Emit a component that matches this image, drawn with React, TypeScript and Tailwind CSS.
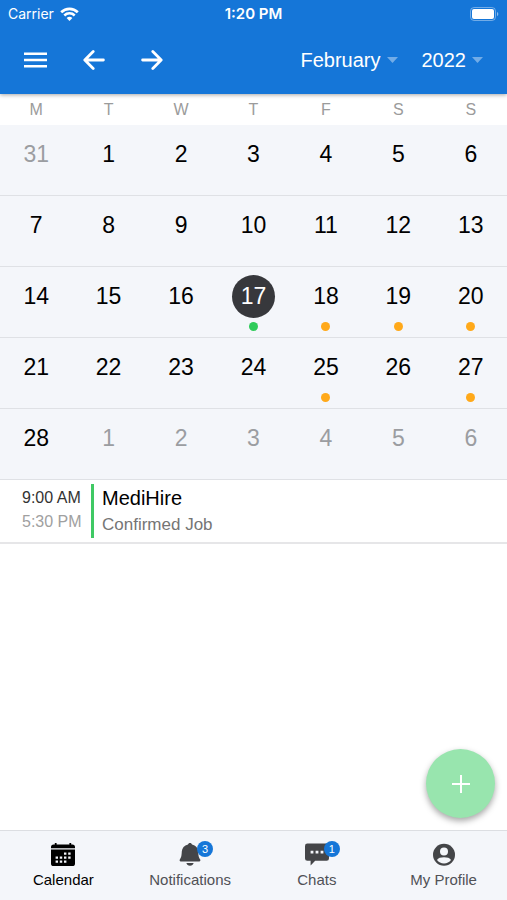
import type { ReactNode } from 'react'
import clsx from 'clsx'

type Day = {
    date: number
    outside?: boolean
    dot?: 'confirmed' | 'pending'
}

const weekdays = ['M', 'T', 'W', 'T', 'F', 'S', 'S']

const months = [
    'January',
    'February',
    'March',
    'April',
    'May',
    'June',
    'July',
    'August',
    'September',
    'October',
    'November',
    'December'
]

const years = ['2021', '2022', '2023']

const today = 17

const pendingDays = [18, 19, 20, 25, 27]

const days: Day[] = [
    { date: 31, outside: true },
    ...Array.from({ length: 28 }, (_, i): Day => {
        const date = i + 1
        if (date === today) return { date, dot: 'confirmed' }
        return { date, dot: pendingDays.includes(date) ? 'pending' : undefined }
    }),
    ...Array.from({ length: 6 }, (_, i): Day => ({ date: i + 1, outside: true }))
]

function StatusBar() {
    return (
        <div className="grid h-7 grid-cols-3 items-center px-2 font-['Inter',sans-serif] text-sm">
            <div className="flex items-center gap-1.5">
                <span>Carrier</span>
                <svg width="19" height="14" viewBox="0 0 19 14" fill="none">
                    <path
                        d="M1.2 5.2a11.8 11.8 0 0 1 16.6 0"
                        stroke="currentColor"
                        strokeWidth="2.7"
                    />
                    <path
                        d="M4.3 8.5a7.4 7.4 0 0 1 10.4 0"
                        stroke="currentColor"
                        strokeWidth="2.5"
                    />
                    <path
                        d="M9.5 14 6.6 11.1a4.2 4.2 0 0 1 5.8 0Z"
                        fill="currentColor"
                    />
                </svg>
            </div>
            <div className="text-center text-[15px] font-semibold">1:20 PM</div>
            <svg
                className="justify-self-end"
                width="30"
                height="15"
                viewBox="0 0 30 15"
                fill="none"
            >
                <rect
                    x="1.5"
                    y="0.5"
                    width="25"
                    height="13"
                    rx="3.6"
                    stroke="white"
                    strokeOpacity="0.4"
                />
                <rect x="3" y="2" width="22" height="10" rx="2" fill="white" />
                <path d="M28 5c1.8.6 1.8 3.600 0 4.200Z" fill="white" fillOpacity="0.5" />
            </svg>
        </div>
    )
}

function PickerSelect({
    label,
    value,
    options
}: {
    label: string
    value: string
    options: string[]
}) {
    return (
        <label className="flex items-center gap-1.5">
            <select
                aria-label={label}
                defaultValue={value}
                className="appearance-none bg-transparent text-xl text-white outline-none [field-sizing:content]"
            >
                {options.map((option) => (
                    <option key={option} className="text-black">
                        {option}
                    </option>
                ))}
            </select>
            <svg width="11" height="6" viewBox="0 0 11 6">
                <path d="M0 0h11L5.5 6Z" fill="white" fillOpacity="0.4" />
            </svg>
        </label>
    )
}

function Toolbar() {
    return (
        <div className="flex h-[66px] items-center justify-between px-6 pb-0.5">
            <div className="flex items-center gap-9">
                <button type="button" aria-label="Menu">
                    <svg width="23" height="22" viewBox="0 0 23 22">
                        <path
                            d="M0 4.800h23M0 11h23M0 17.200h23"
                            stroke="currentColor"
                            strokeWidth="2.6"
                        />
                    </svg>
                </button>
                <button type="button" aria-label="Previous month">
                    <svg
                        width="22"
                        height="22"
                        viewBox="0 0 22 22"
                        fill="none"
                        stroke="currentColor"
                        strokeWidth="2.8"
                        strokeLinecap="round"
                        strokeLinejoin="round"
                    >
                        <path d="M10.200 2.600 1.800 11l8.400 8.400M2 11h18.400" />
                    </svg>
                </button>
                <button type="button" aria-label="Next month">
                    <svg
                        width="22"
                        height="22"
                        viewBox="0 0 22 22"
                        fill="none"
                        stroke="currentColor"
                        strokeWidth="2.8"
                        strokeLinecap="round"
                        strokeLinejoin="round"
                    >
                        <path d="m11.800 2.600 8.400 8.400-8.400 8.400M20 11H1.600" />
                    </svg>
                </button>
            </div>
            <div className="flex items-center gap-6">
                <PickerSelect label="Month" value="February" options={months} />
                <PickerSelect label="Year" value="2022" options={years} />
            </div>
        </div>
    )
}

function DayCell({ day }: { day: Day }) {
    const selected = day.date === today && !day.outside

    return (
        <button
            type="button"
            className="flex h-[71px] flex-col items-center border-b border-[#dfe1e5] pt-2"
        >
            <span
                className={clsx(
                    'flex size-[43px] items-center justify-center rounded-full text-[23px]',
                    selected && 'bg-[#37383c] text-white',
                    day.outside && 'text-[#9b9da1]'
                )}
            >
                {day.date}
            </span>
            {day.dot ? (
                <span
                    className={clsx(
                        'mt-1 size-[9px] rounded-full',
                        day.dot === 'confirmed' ? 'bg-[#2fcb5a]' : 'bg-[#ffa91a]'
                    )}
                />
            ) : null}
        </button>
    )
}

function JobRow() {
    return (
        <a
            href="#job"
            className="flex border-b-2 border-[#e6e6e8] py-1 pl-[22px]"
        >
            <div className="w-[69px] pt-0.5 text-base leading-6">
                <div className="text-[#333]">9:00 AM</div>
                <div className="text-[#a0a0a0]">5:30 PM</div>
            </div>
            <div className="w-[3px] bg-[#3fc964]" />
            <div className="pl-2">
                <div className="text-xl leading-7 text-black">MediHire</div>
                <div className="text-[17px] leading-[26px] text-[#757575]">
                    Confirmed Job
                </div>
            </div>
        </a>
    )
}

function CalendarIcon() {
    return (
        <svg width="26" height="26" viewBox="0 0 26 26" fill="black">
            <path d="M1 5.200A2.600 2.600 0 0 1 3.600 2.600H4.800V1h1.800v1.600h12.800V1h1.800v1.600h1.200A2.600 2.600 0 0 1 25 5.200v1H1Z" />
            <path d="M1 7.400h24v14a2.600 2.600 0 0 1-2.600 2.600H3.600A2.600 2.600 0 0 1 1 21.400Z" />
            <path
                d="M14 10.400h2.400v2.400H14zM18.200 10.400h2.400v2.400h-2.400zM5.600 14.400H8v2.400H5.600zM9.800 14.400h2.400v2.400H9.800zM14 14.400h2.400v2.400H14zM18.200 14.400h2.400v2.400h-2.400zM5.600 18.400H8v2.400H5.600zM9.800 18.400h2.400v2.400H9.800zM14 18.400h2.400v2.400H14z"
                fill="#f4f6fa"
            />
        </svg>
    )
}

function BellIcon() {
    return (
        <svg width="26" height="26" viewBox="0 0 26 26" fill="#444548">
            <path d="M13 1c1.100 0 1.800.7 2 1.500 3.800.9 6 3.600 6.200 7.100.2 4.400.6 6 2 8 .5.900 0 1.900-.9 1.900H3.700c-.9 0-1.400-1-.9-1.900 1.400-2 1.800-3.600 2-8C5 6.100 7.200 3.400 11 2.500c.2-.8.900-1.500 2-1.500Z" />
            <path d="M9.400 21h7.200c-.3 1.600-1.700 2.800-3.600 2.800S9.700 22.600 9.400 21Z" />
        </svg>
    )
}

function ChatIcon() {
    return (
        <svg width="26" height="26" viewBox="0 0 26 26" fill="#444548">
            <path d="M3.400 1.600h19.200a2.400 2.400 0 0 1 2.400 2.400v12.400a2.400 2.400 0 0 1-2.400 2.400H11.200l-4.600 4.600V18.800H3.400A2.400 2.400 0 0 1 1 16.400V4A2.400 2.400 0 0 1 3.400 1.600Z" />
            <path
                d="M6.600 8.800h2.800v2.800H6.600zM11.600 8.800h2.800v2.800h-2.800zM16.600 8.800h2.800v2.800h-2.800z"
                fill="#f4f6fa"
            />
        </svg>
    )
}

function ProfileIcon() {
    return (
        <svg width="26" height="26" viewBox="0 0 26 26">
            <circle cx="13" cy="12.800" r="11" fill="#444548" />
            <circle cx="13" cy="9.400" r="4" fill="#f4f6fa" />
            <path
                d="M6 18C6.900 15.800 10 15.200 13 15.200s6.100.6 7 2.800c-1.600 2.200-4.200 3.500-7 3.500S7.600 20.200 6 18Z"
                fill="#f4f6fa"
            />
        </svg>
    )
}

function Tab({
    label,
    icon,
    badge,
    active
}: {
    label: string
    icon: ReactNode
    badge?: number
    active?: boolean
}) {
    return (
        <button
            type="button"
            className={clsx(
                'flex flex-col items-center pt-[11px] text-[15px] leading-6',
                active ? 'text-black' : 'text-[#505156]'
            )}
        >
            <span className="relative">
                {icon}
                {badge ? (
                    <span className="absolute -top-px left-5 flex size-4 items-center justify-center rounded-full bg-[#1576d8] text-[11px] leading-none text-white">
                        {badge}
                    </span>
                ) : null}
            </span>
            <span>{label}</span>
        </button>
    )
}

export default function App() {
    return (
        <div className="flex min-h-screen flex-col bg-white font-['Liberation_Sans',Arial,sans-serif]">
            <header className="z-10 bg-[#1576d8] text-white shadow-[0_1px_4px_rgba(0,0,0,0.35)]">
                <StatusBar />
                <Toolbar />
            </header>

            <main className="flex flex-1 flex-col">
                <div className="grid h-[31px] grid-cols-7 items-center text-center text-base text-[#9b9b9b]">
                    {weekdays.map((weekday, i) => (
                        <div key={i}>{weekday}</div>
                    ))}
                </div>
                <div className="grid grid-cols-7 bg-[#f4f6fa]">
                    {days.map((day, i) => (
                        <DayCell key={i} day={day} />
                    ))}
                </div>
                <JobRow />
                <div className="mt-auto flex justify-end px-3 pb-3">
                    <button
                        type="button"
                        aria-label="Add job"
                        className="flex size-[69px] items-center justify-center rounded-full bg-[#98e5ae] text-white shadow-[0_3px_6px_rgba(0,0,0,0.35)]"
                    >
                        <svg width="18" height="18" viewBox="0 0 18 18">
                            <path
                                d="M9 0v18M0 9h18"
                                stroke="currentColor"
                                strokeWidth="2"
                            />
                        </svg>
                    </button>
                </div>
            </main>

            <nav className="grid h-[70px] grid-cols-4 border-t border-[#dcdee2] bg-[#f4f6fa]">
                <Tab label="Calendar" icon={<CalendarIcon />} active />
                <Tab label="Notifications" icon={<BellIcon />} badge={3} />
                <Tab label="Chats" icon={<ChatIcon />} badge={1} />
                <Tab label="My Profile" icon={<ProfileIcon />} />
            </nav>
        </div>
    )
}
